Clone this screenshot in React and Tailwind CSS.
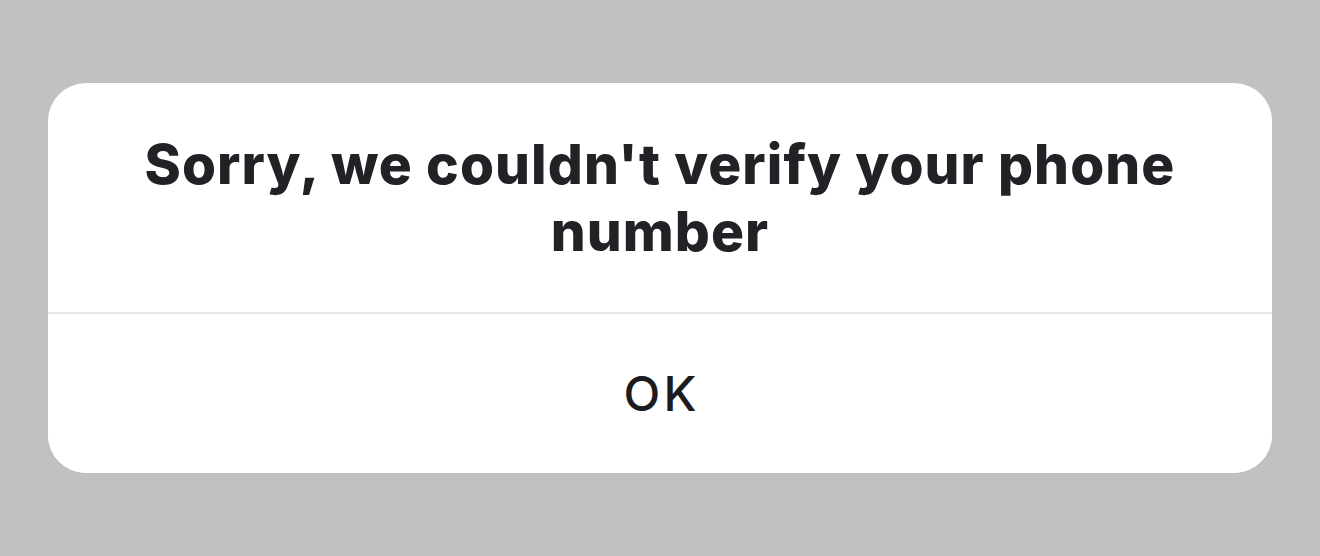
export default function App() {
  return (
    <div className="h-[556px] w-[1320px] bg-[#c1c1c1] flex items-center justify-center" style={{ fontFamily: 'Inter, "Liberation Sans", sans-serif' }}>
      <div className="w-[1224px] h-[390px] rounded-[38px] bg-white flex flex-col overflow-hidden">
        {/* Title */}
        <div className="h-[229px] flex items-center justify-center px-12">
          <h1 className="text-center text-[55px] leading-[67px] font-extrabold tracking-[1.1px] text-[#222226]">
            Sorry, we couldn't verify your phone
            <br />
            number
          </h1>
        </div>

        <div className="h-[2px] bg-[#e6e6e6]" />

        {/* Action */}
        <button className="flex-1 flex items-center justify-center pl-[3px] text-[48px] font-medium tracking-[3px] text-[#1c1c1e] bg-white border-none cursor-pointer">
          OK
        </button>
      </div>
    </div>
  );
}
